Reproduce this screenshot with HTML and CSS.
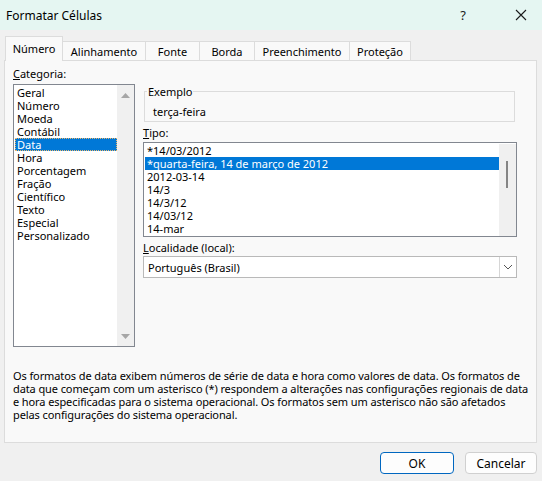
FILE: index.html
```html
<!DOCTYPE html>
<html lang="pt-BR">
<head>
<meta charset="utf-8">
<title>Formatar Células</title>
<link rel="stylesheet" href="styles.css">
</head>
<body>
<div class="titlebar">
  <div class="title">Formatar Células</div>
  <div class="help">?</div>
  <div class="close">
    <svg width="12" height="12" viewBox="0 0 12 12"><path d="M1 1 L11 11 M11 1 L1 11" stroke="#1a1a1a" stroke-width="1.1" fill="none"/></svg>
  </div>
</div>
<div class="dialog">
  <div class="tabs">
    <div class="tab tab-active w-numero">Número</div>
    <div class="tab w-alin">Alinhamento</div>
    <div class="tab w-fonte">Fonte</div>
    <div class="tab w-borda">Borda</div>
    <div class="tab w-preen">Preenchimento</div>
    <div class="tab w-prot">Proteção</div>
  </div>
  <div class="panel">
    <div class="top">
      <div class="catcol">
        <div class="label"><u>C</u>ategoria:</div>
        <div class="catlist">
          <div class="catitems">
            <div class="item">Geral</div>
            <div class="item">Número</div>
            <div class="item">Moeda</div>
            <div class="item">Contábil</div>
            <div class="item item-sel-focus">Data</div>
            <div class="item">Hora</div>
            <div class="item">Porcentagem</div>
            <div class="item">Fração</div>
            <div class="item">Científico</div>
            <div class="item">Texto</div>
            <div class="item">Especial</div>
            <div class="item">Personalizado</div>
          </div>
          <div class="vscroll">
            <svg width="17" height="14" viewBox="0 0 17 14"><path d="M4 10 L8.5 5 L13 10 Z" fill="#a6a6a6"/></svg>
            <svg width="17" height="14" viewBox="0 0 17 14"><path d="M4 4 L8.5 9 L13 4 Z" fill="#a6a6a6"/></svg>
          </div>
        </div>
      </div>
      <div class="rightcol">
        <fieldset class="sample">
          <legend>Exemplo</legend>
          <div class="sample-text">terça-feira</div>
        </fieldset>
        <div class="label tipo-label"><u>T</u>ipo:</div>
        <div class="tipolist">
          <div class="tipoitems">
            <div class="item">*14/03/2012</div>
            <div class="item item-sel">*quarta-feira, 14 de março de 2012</div>
            <div class="item">2012-03-14</div>
            <div class="item">14/3</div>
            <div class="item">14/3/12</div>
            <div class="item">14/03/12</div>
            <div class="item">14-mar</div>
          </div>
          <div class="tscroll"><div class="thumb"></div></div>
        </div>
        <div class="label loc-label"><u>L</u>ocalidade (local):</div>
        <div class="combo">
          <div class="combo-text">Português (Brasil)</div>
          <div class="dd">
            <svg width="10" height="6" viewBox="0 0 10 6"><path d="M1 1 L5 5 L9 1" stroke="#555" stroke-width="1" fill="none"/></svg>
          </div>
        </div>
      </div>
    </div>
    <div class="desc">Os formatos de data exibem números de série de data e hora como valores de data. Os formatos de<br>data que começam com um asterisco (*) respondem a alterações nas configurações regionais de data<br>e hora especificadas para o sistema operacional. Os formatos sem um asterisco não são afetados<br>pelas configurações do sistema operacional.</div>
  </div>
  <div class="buttons">
    <div class="btn btn-ok">OK</div>
    <div class="btn btn-cancel">Cancelar</div>
  </div>
</div>
</body>
</html>
```
FILE: styles.css
```css
* { box-sizing: border-box; }
body {
  margin: 0;
  width: 542px;
  height: 481px;
  overflow: hidden;
  background: #f0f0f0;
  font-family: "Noto Sans", "Open Sans", sans-serif;
  font-size: 11px;
  color: #000;
}
.titlebar {
  height: 30px;
  background: #e5f6f2;
  display: flex;
  align-items: center;
}
.title { flex: 1; padding-left: 6px; font-size: 12px; }
.help { width: 14px; font-size: 13px; margin-right: 45px; text-align: center; color: #1a1a1a; }
.close { width: 12px; height: 12px; margin-right: 15px; display: flex; }

.dialog { padding: 6px 5px 0 4px; }
.tabs { display: flex; align-items: flex-end; height: 24px; padding-left: 1px; }
.tab {
  height: 19px;
  border-top: 1px solid #dcdcdc;
  border-right: 1px solid #dcdcdc;
  background: #f9f9f9;
  display: flex;
  align-items: center;
  justify-content: center;
  padding-top: 1px;
}
.tab-active {
  height: 25px;
  margin-bottom: -1px;
  border-left: 1px solid #dcdcdc;
  position: relative;
  z-index: 1;
  padding-top: 0;
  padding-bottom: 2px;
}
.w-numero { width: 58px; }
.w-alin { width: 83px; }
.w-fonte { width: 54px; }
.w-borda { width: 55px; }
.w-preen { width: 95px; }
.w-prot { width: 61px; }

.panel {
  width: 533px;
  height: 383px;
  border: 1px solid #dcdcdc;
  background: #f9f9f9;
  padding: 5px 0 0 8px;
}
.top { display: flex; gap: 8px; }
.catcol { width: 122px; }
.label { line-height: 16px; height: 16px; }
.catlist {
  margin-top: 2px;
  height: 263px;
  border: 1px solid #828790;
  background: #fff;
  display: flex;
}
.catitems { flex: 1; padding: 1px 0 0 1px; }
.item { line-height: 13px; height: 13px; padding-left: 2px; white-space: nowrap; }
.item-sel-focus { background: #0078d7; color: #fff; outline: 1px dotted #e9b66d; outline-offset: -1px; }
.item-sel { background: #0078d7; color: #fff; }
.vscroll {
  width: 17px;
  background: #f0f0f0;
  display: flex;
  flex-direction: column;
  justify-content: space-between;
  padding: 3px 0 2px;
}
.vscroll svg { display: block; }

.rightcol { width: 374px; }
.sample {
  margin: 19px 2px 0 1px;
  padding: 0;
  border: 1px solid #dcdcdc;
  min-width: 0;
}
.sample legend { padding: 0 1px; margin-left: 2px; line-height: 13px; }
.sample-text { padding: 7px 0 2px 8px; line-height: 14px; }
.tipo-label { margin-top: 3px; }
.tipolist {
  margin-top: 1px;
  height: 95px;
  border: 1px solid #828790;
  background: #fff;
  display: flex;
}
.tipoitems { flex: 1; padding: 1px 0 0 1px; }
.tscroll {
  width: 17px;
  margin: 1px 0 0;
  background: #f0f0f0;
  padding: 17px 0 0 7px;
}
.thumb { width: 2px; height: 27px; background: #858585; }
.loc-label { margin-top: 3px; }
.combo {
  height: 22px;
  border: 1px solid #b9b9b9;
  background: #fff;
  display: flex;
  align-items: center;
}
.combo-text { flex: 1; padding-left: 4px; }
.dd {
  width: 17px;
  height: 20px;
  border-left: 1px solid #d6d6d6;
  display: flex;
  align-items: center;
  justify-content: center;
}

.desc { margin-top: 22px; line-height: 13px; white-space: nowrap; letter-spacing: -0.1px; }

.buttons { display: flex; justify-content: flex-end; gap: 11px; margin-top: 9px; }
.btn {
  height: 22px;
  border-radius: 4px;
  background: #fdfdfd;
  display: flex;
  align-items: center;
  justify-content: center;
  font-size: 12px;
}
.btn-ok { width: 74px; border: 1.5px solid #0067c0; }
.btn-cancel { width: 72px; border: 1px solid #d0d0d0; }
```
